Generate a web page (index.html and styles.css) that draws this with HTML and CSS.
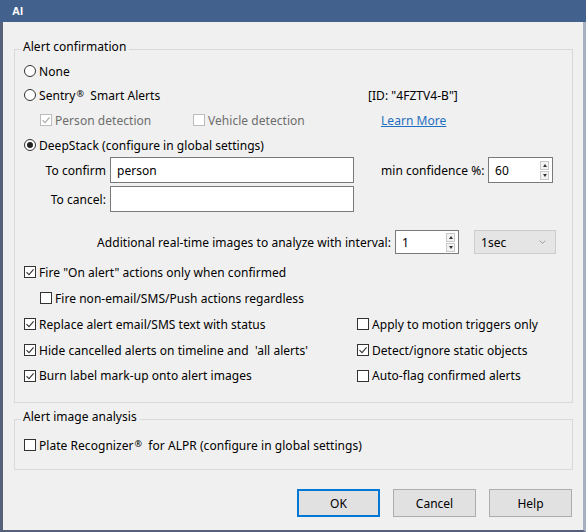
FILE: index.html
```html
<!DOCTYPE html>
<html>
<head>
<meta charset="utf-8">
<link rel="stylesheet" href="styles.css">
</head>
<body>
<div class="window">
  <div class="titlebar"><span class="title">AI</span></div>
  <div class="frame">
    <fieldset class="group group-confirm">
      <legend>Alert confirmation</legend>
      <div class="row r-none">
        <label class="opt"><span class="radio"></span>None</label>
      </div>
      <div class="row r-sentry">
        <label class="opt col-sentry"><span class="radio"></span>Sentry<span class="reg">®</span>&nbsp; Smart Alerts</label>
        <span class="sentry-id">[ID: "4FZTV4-B"]</span>
      </div>
      <div class="row r-detect">
        <label class="opt disabled col-person"><span class="check checked"><svg viewBox="0 0 12 12" width="12" height="12"><path d="M2.5 6.2 L5 8.6 L9.6 3.4" /></svg></span>Person detection</label>
        <label class="opt disabled col-vehicle"><span class="check"></span>Vehicle detection</label>
        <a class="link">Learn More</a>
      </div>
      <div class="row r-deep">
        <label class="opt"><span class="radio on"></span>DeepStack (configure in global settings)</label>
      </div>
      <div class="row r-confirm">
        <span class="field-label">To confirm</span>
        <span class="edit w-text">person</span>
        <span class="conf-label">min confidence %:</span>
        <span class="spin w-conf"><span class="spin-val">60</span><span class="spin-arrows"><span class="arr up"></span><span class="arr down"></span></span></span>
      </div>
      <div class="row r-cancel">
        <span class="field-label">To cancel:</span>
        <span class="edit w-text"></span>
      </div>
      <div class="row r-extra">
        <span class="extra-label">Additional real-time images to analyze with interval:</span>
        <span class="spin w-extra"><span class="spin-val">1</span><span class="spin-arrows"><span class="arr up"></span><span class="arr down"></span></span></span>
        <span class="combo"><span>1sec</span><svg class="chev" viewBox="0 0 8 5" width="7" height="4"><path d="M0.5 0.8 L4 4.2 L7.5 0.8" /></svg></span>
      </div>
      <div class="row r-list">
        <label class="opt"><span class="check checked"><svg viewBox="0 0 12 12" width="12" height="12"><path d="M2.5 6.2 L5 8.6 L9.6 3.4" /></svg></span>Fire "On alert" actions only when confirmed</label>
      </div>
      <div class="row r-list indent">
        <label class="opt"><span class="check"></span>Fire non-email/SMS/Push actions regardless</label>
      </div>
      <div class="row r-list">
        <label class="opt col-left"><span class="check checked"><svg viewBox="0 0 12 12" width="12" height="12"><path d="M2.5 6.2 L5 8.6 L9.6 3.4" /></svg></span>Replace alert email/SMS text with status</label>
        <label class="opt"><span class="check"></span>Apply to motion triggers only</label>
      </div>
      <div class="row r-list">
        <label class="opt col-left"><span class="check checked"><svg viewBox="0 0 12 12" width="12" height="12"><path d="M2.5 6.2 L5 8.6 L9.6 3.4" /></svg></span>Hide cancelled alerts on timeline and&nbsp; 'all alerts'</label>
        <label class="opt"><span class="check checked"><svg viewBox="0 0 12 12" width="12" height="12"><path d="M2.5 6.2 L5 8.6 L9.6 3.4" /></svg></span>Detect/ignore static objects</label>
      </div>
      <div class="row r-list r-last">
        <label class="opt col-left"><span class="check checked"><svg viewBox="0 0 12 12" width="12" height="12"><path d="M2.5 6.2 L5 8.6 L9.6 3.4" /></svg></span>Burn label mark-up onto alert images</label>
        <label class="opt"><span class="check"></span>Auto-flag confirmed alerts</label>
      </div>
    </fieldset>

    <fieldset class="group group-image">
      <legend>Alert image analysis</legend>
      <div class="row r-plate">
        <label class="opt"><span class="check"></span>Plate Recognizer<span class="reg">®</span>&nbsp; for ALPR (configure in global settings)</label>
      </div>
    </fieldset>

    <div class="buttons">
      <button class="btn default">OK</button>
      <button class="btn">Cancel</button>
      <button class="btn">Help</button>
    </div>
  </div>
</div>
</body>
</html>
```
FILE: styles.css
```css
* { box-sizing: border-box; }
html, body { margin: 0; padding: 0; }
body {
  width: 586px;
  height: 532px;
  overflow: hidden;
  background: #f0f0f0;
  font-family: "Noto Sans", "Segoe UI", sans-serif;
  font-size: 12px;
  letter-spacing: 0.04px;
  color: #000;
}
.window {
  width: 586px;
  height: 532px;
  display: flex;
  flex-direction: column;
}
.titlebar {
  height: 22px;
  flex: none;
  background: #42628d;
  display: flex;
  align-items: center;
  padding-left: 12px;
}
.title {
  color: #fff;
  font-weight: bold;
  font-size: 11px;
  letter-spacing: 0;
  font-family: "Liberation Sans", sans-serif;
}
.frame {
  flex: 1;
  background: #f0f0f0;
  border-left: 3px solid #55617a;
  border-right: 3px solid #a6b0c0;
  border-bottom: 2px solid #55617a;
  display: flex;
  flex-direction: column;
}
.group {
  margin: 0 10px 0 11px;
  padding: 0 0 0 9px;
  border: 1px solid #d9d9d9;
  min-width: 0;
}
.group legend {
  padding: 0 3px 4px 2px;
  margin-left: -3px;
  line-height: 16px;
}
.group-confirm {
  margin-top: 17px;
  padding-bottom: 14px;
}
.group-image {
  margin-top: 6px;
  padding-bottom: 11px;
}
.row {
  display: flex;
  align-items: center;
  white-space: nowrap;
}
.r-none, .r-sentry { height: 24px; }
.r-detect { height: 26px; padding-left: 16px; }
.r-deep { height: 24px; }
.r-confirm { height: 26px; }
.r-cancel { height: 26px; margin-top: 3px; }
.r-extra { height: 24px; margin-top: 18px; }
.r-list { height: 26px; }
.r-extra + .r-list { margin-top: 5px; }
.r-last { height: 25px; }
.indent { padding-left: 16px; }
.r-plate { height: 26px; margin-top: 3px; }

.opt {
  display: flex;
  align-items: center;
}
.radio {
  width: 12px;
  height: 12px;
  border: 1px solid #333;
  border-radius: 50%;
  background: #fff;
  margin-right: 3px;
  display: flex;
  align-items: center;
  justify-content: center;
  flex: none;
}
.radio.on::after {
  content: "";
  width: 6px;
  height: 6px;
  border-radius: 50%;
  background: #222;
}
.check {
  width: 12px;
  height: 12px;
  border: 1px solid #333;
  background: #fff;
  margin-right: 3px;
  flex: none;
  display: flex;
  align-items: center;
  justify-content: center;
}
.check svg {
  width: 12px;
  height: 12px;
  flex: none;
}
.check svg path {
  fill: none;
  stroke: #333;
  stroke-width: 1.1;
}
.reg {
  font-size: 9px;
  position: relative;
  top: -2px;
  margin-left: 1px;
}
.disabled { color: #6d6d6d; }
.disabled .check { border-color: #bcbcbc; }
.disabled .check svg path { stroke: #a8a8a8; }

.col-sentry { width: 344px; }
.col-person { width: 153px; }
.col-vehicle { width: 188px; }
.col-left { width: 333px; }

.link {
  color: #1f6fbf;
  text-decoration: underline;
}

.field-label {
  width: 82px;
  text-align: right;
  margin-right: 4px;
}
.edit {
  display: flex;
  align-items: center;
  height: 26px;
  background: #fff;
  border: 1px solid #7a7a7a;
  padding-left: 6px;
}
.w-text { width: 244px; }
.conf-label {
  margin-left: 27px;
  width: 103px;
  margin-right: 4px;
}
.spin {
  display: flex;
  align-items: center;
  background: #fff;
  border: 1px solid #7a7a7a;
  padding-left: 6px;
  padding-right: 3px;
}
.w-conf { width: 65px; height: 26px; }
.w-extra { width: 64px; height: 24px; }
.spin-val { flex: 1; }
.spin-arrows {
  display: flex;
  flex-direction: column;
  gap: 1px;
}
.arr {
  width: 9px;
  height: 9px;
  border: 1px solid #c9c9c9;
  background: #f3f3f3;
  display: flex;
  align-items: center;
  justify-content: center;
}
.arr::after {
  content: "";
  width: 0;
  height: 0;
  border-left: 2px solid transparent;
  border-right: 2px solid transparent;
}
.arr.up::after { border-bottom: 3px solid #333; }
.arr.down::after { border-top: 3px solid #333; }

.extra-label {
  width: 367px;
  text-align: right;
  margin-right: 4px;
}
.combo {
  margin-left: 15px;
  width: 82px;
  height: 24px;
  background: #e5e5e5;
  border: 1px solid #cccccc;
  display: flex;
  align-items: center;
  justify-content: space-between;
  padding: 0 9px 0 6px;
}
.chev path {
  fill: none;
  stroke: #8a8a8a;
  stroke-width: 1;
}

.buttons {
  display: flex;
  justify-content: flex-end;
  gap: 13px;
  margin-top: 19px;
  padding-right: 11px;
}
.btn {
  width: 83px;
  height: 28px;
  background: #e1e1e1;
  border: 1px solid #adadad;
  font-family: inherit;
  font-size: 12px;
  color: #000;
  padding: 0;
}
.btn.default {
  border: 1px solid #0078d7;
  box-shadow: inset 0 0 0 1px #0078d7;
}
```
